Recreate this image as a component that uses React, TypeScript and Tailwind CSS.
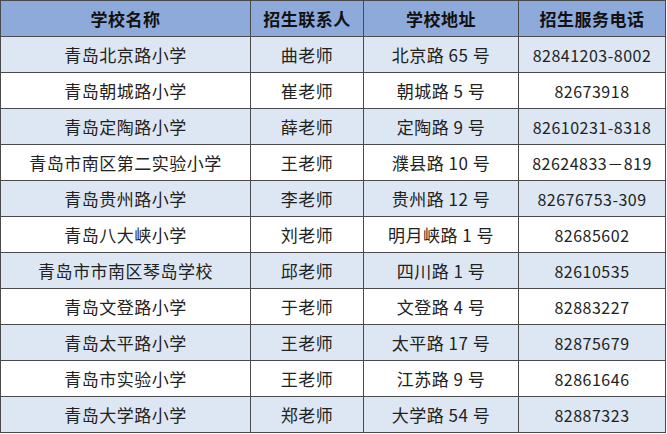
import React from "react";

const rows: [string, string, string, string][] = [
  ["青岛北京路小学", "曲老师", "北京路 65 号", "82841203-8002"],
  ["青岛朝城路小学", "崔老师", "朝城路 5 号", "82673918"],
  ["青岛定陶路小学", "薛老师", "定陶路 9 号", "82610231-8318"],
  ["青岛市南区第二实验小学", "王老师", "濮县路 10 号", "82624833－819"],
  ["青岛贵州路小学", "李老师", "贵州路 12 号", "82676753-309"],
  ["青岛八大峡小学", "刘老师", "明月峡路 1 号", "82685602"],
  ["青岛市市南区琴岛学校", "邱老师", "四川路 1 号", "82610535"],
  ["青岛文登路小学", "于老师", "文登路 4 号", "82883227"],
  ["青岛太平路小学", "王老师", "太平路 17 号", "82875679"],
  ["青岛市实验小学", "王老师", "江苏路 9 号", "82861646"],
  ["青岛大学路小学", "郑老师", "大学路 54 号", "82887323"],
];

const widths = ["w-[250px]", "w-[113px]", "w-[155px]", "w-[147px]"];

export default function App() {
  return (
    <div
      className="bg-white w-[667px] h-[434px]"
      style={{ fontFamily: '"Noto Sans CJK SC", "Noto Sans", sans-serif' }}
    >
      <div className="w-[666px] border-l border-t border-[#4a4a4a] flex flex-col">
        <div className="flex bg-[#8eaadb]">
          {["学校名称", "招生联系人", "学校地址", "招生服务电话"].map((h, i) => (
            <div
              key={h}
              className={`${widths[i]} h-[36px] border-r border-b border-[#4a4a4a] flex items-center justify-center text-[17px] font-bold text-[#111] tracking-[0.5px]`}
            >
              {h}
            </div>
          ))}
        </div>
        {rows.map((r, ri) => (
          <div
            key={ri}
            className={`flex ${ri % 2 === 0 ? "bg-[#dde7f3]" : "bg-white"}`}
          >
            {r.map((c, ci) => (
              <div
                key={ci}
                className={`${widths[ci]} h-[36px] border-r border-b border-[#4a4a4a] flex items-center justify-center text-[#222] tracking-[0.5px] ${
                  ci === 3 ? "text-[16px]" : "text-[17px]"
                }`}
              >
                {c}
              </div>
            ))}
          </div>
        ))}
      </div>
    </div>
  );
}
